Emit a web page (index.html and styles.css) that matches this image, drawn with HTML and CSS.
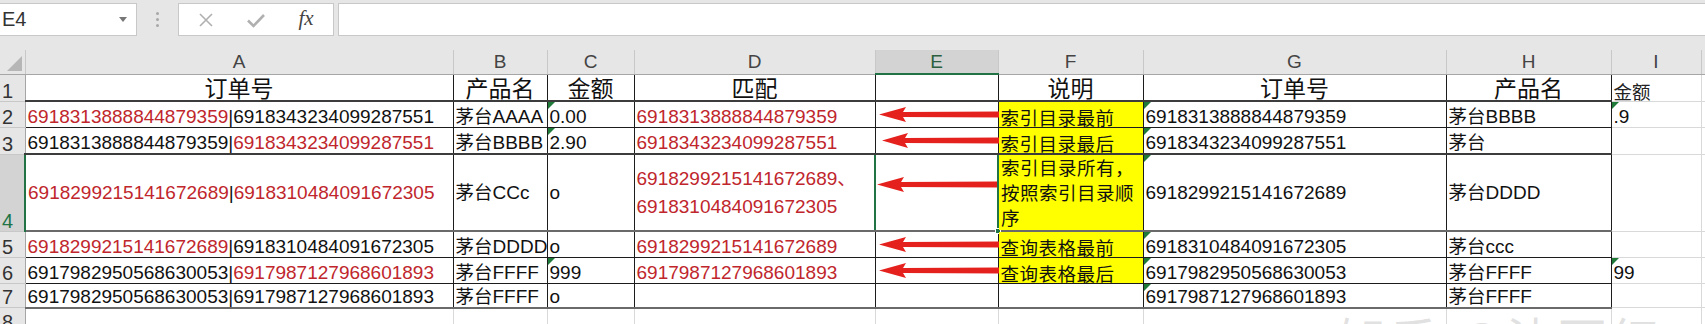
FILE: index.html
```html
<!DOCTYPE html>
<html lang="zh-CN">
<head>
    <meta charset="UTF-8">
    <title>订单号匹配</title>
    <link rel="stylesheet" href="styles.css">
</head>
<body>
    <div class="formula-bar">
        <div class="name-box"><span>E4</span><span class="caret"></span></div>
        <div class="grip"><i></i><i></i><i></i></div>
        <div class="fn-box">
            <span class="fn-icon">
                <svg width="16" height="16" viewBox="0 0 16 16"><path d="M2 2 L14 14 M14 2 L2 14" stroke="#b0b0b0" stroke-width="1.6" fill="none"/></svg>
            </span>
            <span class="fn-icon">
                <svg width="20" height="16" viewBox="0 0 20 16"><path d="M2 8.5 L7.5 14 L18 3" stroke="#b0b0b0" stroke-width="2.6" fill="none"/></svg>
            </span>
            <span class="fn-icon fx">fx</span>
        </div>
        <div class="formula-input"></div>
    </div>

    <table class="sheet">
        <colgroup>
            <col class="w-rh"><col class="w-a"><col class="w-b"><col class="w-c"><col class="w-d">
            <col class="w-e"><col class="w-f"><col class="w-g"><col class="w-h"><col class="w-i"><col class="w-j">
        </colgroup>
        <tr class="r-head">
            <th class="corner"><span class="select-all"></span></th>
            <th>A</th><th>B</th><th>C</th><th>D</th><th class="active">E</th>
            <th>F</th><th>G</th><th>H</th><th>I</th><th></th>
        </tr>
        <tr class="r-title thick">
            <th class="rh">1</th>
            <td class="title">订单号</td>
            <td class="title">产品名</td>
            <td class="title">金额</td>
            <td class="title">匹配</td>
            <td></td>
            <td class="title">说明</td>
            <td class="title">订单号</td>
            <td class="title">产品名</td>
            <td class="grid zh-cell">金额</td>
            <td class="grid"></td>
        </tr>
        <tr class="r-std">
            <th class="rh">2</th>
            <td><span class="red">6918313888844879359</span>|6918343234099287551</td>
            <td><span class="zh">茅台</span>AAAA</td>
            <td class="flag">0.00</td>
            <td class="red">6918313888844879359</td>
            <td class="arrow-cell"><svg class="arrow" width="123" height="25" viewBox="0 0 123 25"><path d="M3 12.5 L30 5 L27 10 L123 9.5 L123 15.5 L27 15 L30 20 Z"/></svg></td>
            <td class="note">索引目录最前</td>
            <td class="flag">6918313888844879359</td>
            <td><span class="zh">茅台</span>BBBB</td>
            <td class="grid flag">.9</td>
            <td class="grid"></td>
        </tr>
        <tr class="r-std thick">
            <th class="rh">3</th>
            <td>6918313888844879359|<span class="red">6918343234099287551</span></td>
            <td><span class="zh">茅台</span>BBBB</td>
            <td class="flag">2.90</td>
            <td class="red">6918343234099287551</td>
            <td class="arrow-cell"><svg class="arrow" width="123" height="25" viewBox="0 0 123 25"><path d="M6 12.5 L32 5 L29 10 L123 9.5 L123 15.5 L29 15 L32 20 Z"/></svg></td>
            <td class="note">索引目录最后</td>
            <td class="flag">6918343234099287551</td>
            <td><span class="zh">茅台</span></td>
            <td class="grid"></td>
            <td class="grid"></td>
        </tr>
        <tr class="r-tall thick-grey">
            <th class="rh active">4</th>
            <td class="mid"><span class="red">6918299215141672689</span>|<span class="red">6918310484091672305</span></td>
            <td class="mid"><span class="zh">茅台</span>CCc</td>
            <td class="mid">o</td>
            <td class="mid red two-line">6918299215141672689<span class="zh">、</span><br>6918310484091672305</td>
            <td class="arrow-cell selected"><svg class="arrow" width="123" height="25" viewBox="0 0 123 25"><path d="M1 12.5 L28 5 L25 10 L121 9.5 L121 15.5 L25 15 L28 20 Z"/></svg><span class="fill-handle"></span></td>
            <td class="note wrap">索引目录所有，按照索引目录顺序</td>
            <td class="mid flag">6918299215141672689</td>
            <td class="mid"><span class="zh">茅台</span>DDDD</td>
            <td class="grid"></td>
            <td class="grid"></td>
        </tr>
        <tr class="r-std">
            <th class="rh">5</th>
            <td><span class="red">6918299215141672689</span>|6918310484091672305</td>
            <td><span class="zh">茅台</span>DDDD</td>
            <td>o</td>
            <td class="red">6918299215141672689</td>
            <td class="arrow-cell"><svg class="arrow" width="123" height="25" viewBox="0 0 123 25"><path d="M3 12.5 L30 5 L27 10 L123 9.5 L123 15.5 L27 15 L30 20 Z"/></svg></td>
            <td class="note">查询表格最前</td>
            <td class="flag">6918310484091672305</td>
            <td><span class="zh">茅台</span>ccc</td>
            <td class="grid"></td>
            <td class="grid"></td>
        </tr>
        <tr class="r-std">
            <th class="rh">6</th>
            <td>6917982950568630053|<span class="red">6917987127968601893</span></td>
            <td><span class="zh">茅台</span>FFFF</td>
            <td class="flag">999</td>
            <td class="red">6917987127968601893</td>
            <td class="arrow-cell"><svg class="arrow" width="123" height="25" viewBox="0 0 123 25"><path d="M3 12.5 L30 5 L27 10 L123 9.5 L123 15.5 L27 15 L30 20 Z"/></svg></td>
            <td class="note">查询表格最后</td>
            <td class="flag">6917982950568630053</td>
            <td><span class="zh">茅台</span>FFFF</td>
            <td class="grid flag">99</td>
            <td class="grid"></td>
        </tr>
        <tr class="r-std thick-grey">
            <th class="rh">7</th>
            <td>6917982950568630053|6917987127968601893</td>
            <td><span class="zh">茅台</span>FFFF</td>
            <td>o</td>
            <td></td>
            <td></td>
            <td></td>
            <td class="flag">6917987127968601893</td>
            <td><span class="zh">茅台</span>FFFF</td>
            <td class="grid"></td>
            <td class="grid"></td>
        </tr>
        <tr class="r-std empty">
            <th class="rh">8</th>
            <td class="grid"></td><td class="grid"></td><td class="grid"></td><td class="grid"></td><td class="grid"></td>
            <td class="grid"></td><td class="grid"></td><td class="grid"></td><td class="grid"></td><td class="grid"></td>
        </tr>
    </table>

    <div class="watermark">知乎 @沈丽红</div>
</body>
</html>
```

FILE: styles.css
```css
* {
    margin: 0;
    padding: 0;
    box-sizing: border-box;
}

body {
    width: 1705px;
    height: 324px;
    overflow: hidden;
    position: relative;
    background: #ffffff;
    font-family: "Liberation Sans", "Noto Sans CJK SC", sans-serif;
    color: #111;
}

/* formula bar */

.formula-bar {
    height: 50px;
    padding-top: 3px;
    display: flex;
    align-items: flex-start;
    background: #e6e6e6;
}

.name-box {
    width: 138px;
    height: 33px;
    margin-left: -1px;
    padding: 0 9px 0 2px;
    display: flex;
    align-items: center;
    justify-content: space-between;
    background: #fff;
    border: 1px solid #c8c8c8;
    font: 20px "Liberation Sans", sans-serif;
    color: #333;
}

.caret {
    width: 0;
    height: 0;
    border-left: 4px solid transparent;
    border-right: 4px solid transparent;
    border-top: 5px solid #777;
}

.grip {
    width: 3px;
    margin: 9px 19px 0 19px;
    display: flex;
    flex-direction: column;
    gap: 3px;
}

.grip i {
    width: 3px;
    height: 3px;
    border-radius: 50%;
    background: #a8a8a8;
}

.fn-box {
    width: 156px;
    height: 33px;
    padding-left: 2px;
    display: flex;
    align-items: center;
    background: #fff;
    border: 1px solid #c8c8c8;
}

.fn-icon {
    width: 50px;
    display: flex;
    justify-content: center;
}

.fx {
    font: italic 21px "Liberation Serif", serif;
    color: #444;
    padding-bottom: 2px;
}

.formula-input {
    flex: 1;
    height: 33px;
    margin-left: 4px;
    margin-right: -1px;
    background: #fff;
    border: 1px solid #c8c8c8;
}

/* sheet */

.sheet {
    border-collapse: collapse;
    table-layout: fixed;
    width: 1705px;
}

.w-rh { width: 25px; }
.w-a { width: 428px; }
.w-b { width: 94px; }
.w-c { width: 87px; }
.w-d { width: 241px; }
.w-e { width: 123px; }
.w-f { width: 145px; }
.w-g { width: 303px; }
.w-h { width: 165px; }
.w-i { width: 90px; }
.w-j { width: 4px; }

.r-head { height: 24px; }
.r-title { height: 27px; }
.r-std { height: 25px; }
.r-std.thick,
.r-std.thick-grey { height: 24px; }
.r-tall { height: 77px; }

th, td {
    padding: 0 2px;
    white-space: nowrap;
    overflow: visible;
    font-weight: normal;
}

.r-head th {
    background: #e6e6e6;
    border-right: 1px solid #c8c8c8;
    border-bottom: 1px solid #a6a6a6;
    font: 19px/20px "Liberation Sans", sans-serif;
    color: #444;
    text-align: center;
    vertical-align: middle;
}

.r-head th.active {
    background: #d3d3d3;
    border-bottom: 2px solid #217346;
    color: #2c5f3f;
}

.corner {
    position: relative;
}

.select-all {
    position: absolute;
    right: 3px;
    bottom: 3px;
    width: 0;
    height: 0;
    border-left: 15px solid transparent;
    border-bottom: 15px solid #b6b6b6;
}

.rh {
    background: #e6e6e6;
    border-right: 1px solid #a6a6a6;
    border-bottom: 1px solid #c8c8c8;
    font-size: 20px;
    color: #333;
    text-align: left;
    vertical-align: bottom;
    line-height: 20px;
}

.rh.active {
    background: #d3d3d3;
    border-right: 2px solid #217346;
    color: #217346;
}

td {
    position: relative;
    border: 1px solid #1c1c1c;
    font-size: 19px;
    line-height: 20px;
    vertical-align: bottom;
    text-align: left;
}

tr.thick td {
    border-bottom: 2px solid #3c3c3c;
}

tr.thick-grey td {
    border-bottom: 2px solid #6a6a6a;
}

td.grid,
tr.thick td.grid,
tr.thick-grey td.grid {
    border: 1px solid #d9d9d9;
}

.title {
    font-family: "Noto Sans CJK SC", sans-serif;
    font-size: 23px;
    line-height: 24px;
    text-align: center;
    vertical-align: middle;
}

.zh,
.zh-cell,
.note {
    font-family: "Noto Sans CJK SC", sans-serif;
    font-size: 18.5px;
}

.zh {
    line-height: 1;
}

.zh-cell {
    color: #222;
}

.red {
    color: #c0262c;
}

.mid {
    vertical-align: middle;
}

.two-line {
    line-height: 28px;
}

.note {
    background: #ffff00;
    line-height: 20px;
    letter-spacing: 0.5px;
}

.note.wrap {
    white-space: normal;
    vertical-align: top;
    line-height: 25px;
}

/* green error markers */
.flag::before {
    content: '';
    position: absolute;
    top: 0;
    left: 0;
    border-top: 7px solid #1f7a3a;
    border-right: 7px solid transparent;
}

.arrow-cell {
    padding: 0;
    vertical-align: middle;
}

.arrow {
    display: block;
}

.arrow path {
    fill: #e5211d;
}

.selected {
    border: 2px solid #217346;
    vertical-align: top;
    padding-top: 17px;
}

.fill-handle {
    position: absolute;
    right: -4px;
    bottom: -4px;
    width: 6px;
    height: 6px;
    background: #217346;
    border: 1px solid #fff;
}

.watermark {
    position: absolute;
    left: 1338px;
    top: 313px;
    font: 48px/1 "Noto Sans CJK SC", sans-serif;
    color: rgba(120, 120, 120, 0.22);
    letter-spacing: 4px;
    white-space: nowrap;
    pointer-events: none;
}
```
